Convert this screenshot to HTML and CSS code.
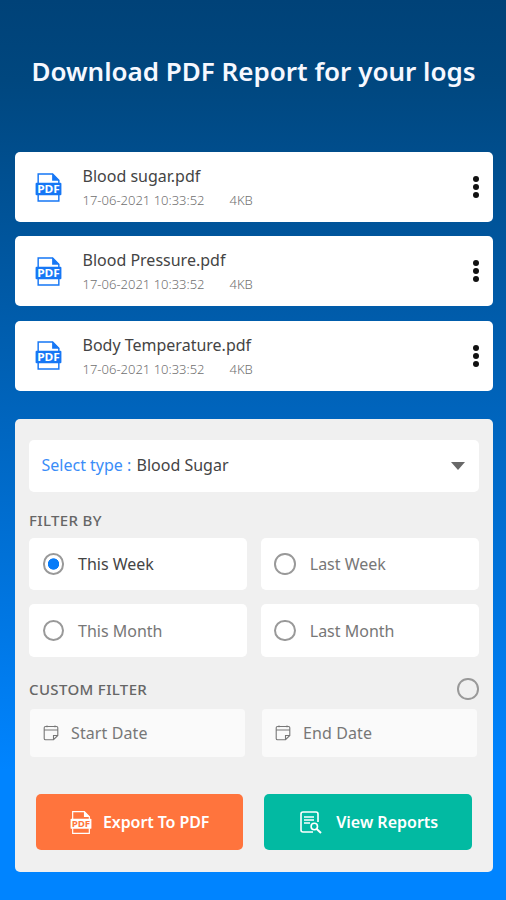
FILE: index.html
```
<!DOCTYPE html>
<html lang="en">
<head>
<meta charset="utf-8">
<title>Download PDF Report</title>
<link rel="stylesheet" href="styles.css">
</head>
<body>
<svg class="defs" aria-hidden="true">
  <symbol id="pdf" viewBox="0 0 26 30">
    <path d="M3 11V2H17L23 8V11M3 22V28H23V22" fill="none" stroke="currentColor" stroke-width="1.4"/>
    <path d="M16.5 1.5V8.5H23.5Z" fill="currentColor"/>
    <rect x=".5" y="10.5" width="25" height="12" rx="1" fill="currentColor"/>
    <text x="13" y="20.4" class="pdf-label" text-anchor="middle" textLength="22" lengthAdjust="spacingAndGlyphs">PDF</text>
  </symbol>
  <symbol id="dots" viewBox="0 0 8 24">
    <circle cx="4" cy="4" r="3"/><circle cx="4" cy="12" r="3"/><circle cx="4" cy="20" r="3"/>
  </symbol>
  <symbol id="calendar" viewBox="0 0 16 16">
    <path d="M2.5 1.5H13.5Q14.8 1.5 14.8 2.8V10.5L10.5 14.7H2.5Q1.2 14.7 1.2 13.4V2.8Q1.2 1.5 2.5 1.5ZM1.2 5H14.8M10.5 14.5V10.5H14.7M4 .6V2.2M12 .6V2.2" fill="none" stroke="currentColor" stroke-width="1.1"/>
  </symbol>
</svg>
<main class="screen">
  <h1 class="title">Download PDF Report for your logs</h1>
  <section class="files">
    <article class="file">
      <svg class="file-icon"><use href="#pdf"/></svg>
      <div class="file-info">
        <h2 class="file-name">Blood sugar.pdf</h2>
        <p class="meta"><span class="date">17-06-2021 10:33:52</span><span class="size">4KB</span></p>
      </div>
      <svg class="dots"><use href="#dots"/></svg>
    </article>
    <article class="file">
      <svg class="file-icon"><use href="#pdf"/></svg>
      <div class="file-info">
        <h2 class="file-name">Blood Pressure.pdf</h2>
        <p class="meta"><span class="date">17-06-2021 10:33:52</span><span class="size">4KB</span></p>
      </div>
      <svg class="dots"><use href="#dots"/></svg>
    </article>
    <article class="file">
      <svg class="file-icon"><use href="#pdf"/></svg>
      <div class="file-info">
        <h2 class="file-name">Body Temperature.pdf</h2>
        <p class="meta"><span class="date">17-06-2021 10:33:52</span><span class="size">4KB</span></p>
      </div>
      <svg class="dots"><use href="#dots"/></svg>
    </article>
  </section>
  <section class="panel">
    <div class="select">
      <span class="select-label">Select type :</span><span class="select-value">Blood Sugar</span>
      <i class="caret"></i>
    </div>
    <h3 class="heading filter">FILTER BY</h3>
    <div class="options">
      <label class="option selected"><i class="radio on"></i><span>This Week</span></label>
      <label class="option"><i class="radio"></i><span>Last Week</span></label>
      <label class="option"><i class="radio"></i><span>This Month</span></label>
      <label class="option"><i class="radio"></i><span>Last Month</span></label>
    </div>
    <div class="custom"><h3 class="heading">CUSTOM FILTER</h3><i class="radio"></i></div>
    <div class="dates">
      <div class="date-box"><svg class="cal"><use href="#calendar"/></svg><span>Start Date</span></div>
      <div class="date-box"><svg class="cal"><use href="#calendar"/></svg><span>End Date</span></div>
    </div>
    <div class="actions">
      <button class="btn export"><svg class="btn-pdf"><use href="#pdf"/></svg><span>Export To PDF</span></button>
      <button class="btn view">
        <svg class="btn-view" viewBox="0 0 22 23" fill="none" stroke="currentColor" stroke-width="1.6">
          <path d="M18 11V3Q18 1 16 1H3Q1 1 1 3V19Q1 21 3 21H13M4 6H14M4 9H14M4 12H10"/>
          <circle cx="14.3" cy="15.5" r="3.2"/><path d="M16.7 18L21 22" stroke-width="2"/>
        </svg><span>View Reports</span></button>
    </div>
  </section>
</main>
</body>
</html>
```
FILE: styles.css
```
* { box-sizing: border-box; margin: 0; padding: 0; }
body { font-family: "Noto Sans", "Open Sans", sans-serif; width: 506px; height: 900px; overflow: hidden; }
.defs { display: none; }
.screen { height: 900px; padding: 51px 13.5px 0 14.5px; background: linear-gradient(#004278 0, #00477f 80px, #0084ff 770px); }
.title { height: 40px; line-height: 40px; margin-bottom: 61px; text-align: center; white-space: nowrap; color: #f6f8ff; font-size: 26px; font-weight: 600; }
.files { display: flex; flex-direction: column; gap: 14.4px; }
.file { display: flex; align-items: center; height: 70px; padding: 0 13px 0 20px; background: #fff; border-radius: 5px; }
.file-icon { width: 27px; height: 31px; color: #1677f5; }
.pdf-label { font: 700 10.5px "Noto Sans", sans-serif; fill: var(--label, #fff); }
.file-info { flex: 1; margin-left: 21px; padding-top: 1.5px; }
.file-name { font-size: 16px; font-weight: 400; line-height: 24px; color: #444; white-space: nowrap; }
.meta { display: flex; font-size: 13px; line-height: 24px; color: #707070; white-space: nowrap; font-weight: 300; }
.date { width: 147px; }
.dots { width: 8px; height: 24px; fill: #111; }
.panel { margin-top: 28.2px; height: 453.5px; padding: 21px 14px 0 14.5px; background: #f0f0f0; border-radius: 5px; }
.select { display: flex; align-items: center; height: 52px; padding: 0 14px 2px 12.5px; background: #fff; border-radius: 5px; font-size: 16px; color: #444; }
.select-label { color: #3a8df8; width: 95px; white-space: nowrap; }
.caret { margin: 3px 0 0 auto; border: 7.5px solid transparent; border-top: 8px solid #686868; border-bottom: 0; }
.heading { font-size: 15px; font-weight: 500; line-height: 20px; letter-spacing: .35px; color: #666; white-space: nowrap; }
.filter { margin: 18px 0 8px; }
.options { display: grid; grid-template-columns: 1fr 1fr; gap: 14px; }
.option { display: flex; align-items: center; gap: 14px; height: 52.5px; padding-left: 13.5px; background: #fff; border-radius: 5px; font-size: 16px; color: #777; }
.option.selected { color: #444; }
.radio { width: 21.5px; height: 21.5px; border: 2px solid #999; border-radius: 50%; }
.radio.on { background: radial-gradient(circle, #087cf8 5.3px, #fff 6px); }
.custom { display: flex; align-items: center; justify-content: space-between; height: 52px; padding-top: 12px; }
.dates { display: grid; grid-template-columns: 1fr 1fr; gap: 17px; padding: 0 1.5px 0 1px; }
.date-box { display: flex; align-items: center; height: 48.5px; padding-left: 13px; gap: 12px; background: #fafafa; border-radius: 4px; font-size: 16px; color: #777; letter-spacing: .1px; }
.cal { width: 16px; height: 16px; }
.actions { display: grid; grid-template-columns: 1fr 1fr; gap: 21px; margin: 37px 7px 0 7px; }
.btn { display: flex; align-items: center; height: 55.5px; border: 0; border-radius: 5px; color: #fff; font: 600 16px "Noto Sans", sans-serif; white-space: nowrap; }
.export { --label: #ff743d; background: #ff743d; padding-left: 34px; letter-spacing: -.1px; }
.view { background: #02baa2; padding-left: 36px; }
.btn-pdf { width: 22px; height: 25px; margin-right: 11px; }
.btn-view { width: 22px; height: 23px; margin-right: 14px; }
```
